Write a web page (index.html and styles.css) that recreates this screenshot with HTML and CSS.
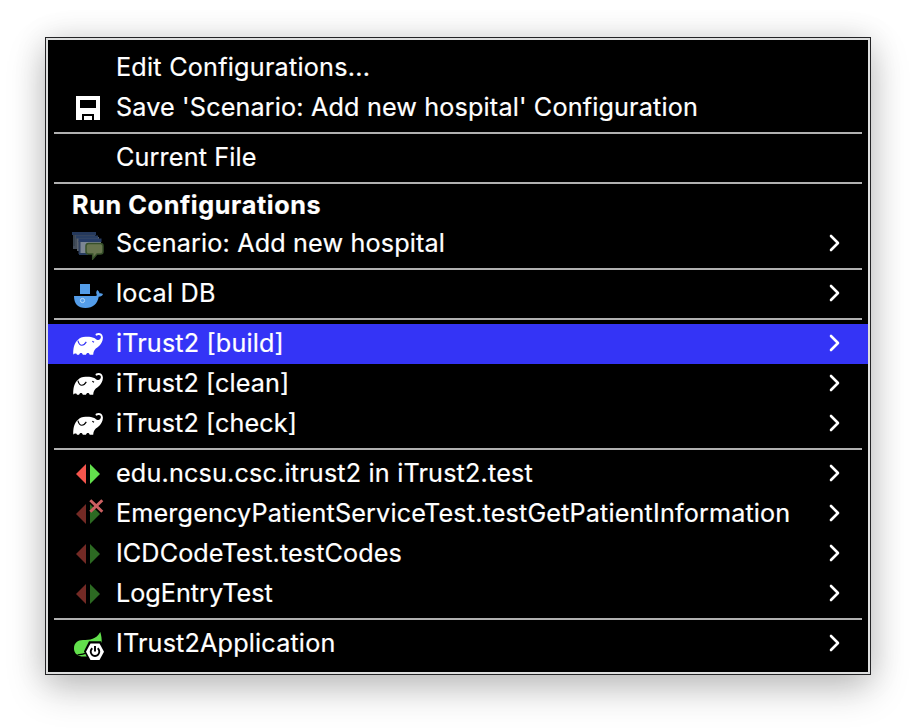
FILE: index.html
```html
<!DOCTYPE html>
<html lang="en">
<head>
<meta charset="utf-8">
<title>Run Configurations</title>
<link rel="stylesheet" href="styles.css">
</head>
<body>
<svg class="defs" width="0" height="0" aria-hidden="true">
  <symbol id="chevron" viewBox="0 0 12 18"><path d="M2 2l7 7-7 7" fill="none" stroke="#fff" stroke-width="2.6" stroke-linecap="round" stroke-linejoin="round"/></symbol>
  <symbol id="gradle" viewBox="0 0 32 32">
    <path d="M1.300 26.700C.9 20.500 2.300 15 6 11.800c1.600-2 4.200-3 7.500-3.100 3.200-.1 6.300 0 8.700 1.300 1.300.7 2.300 1.700 3.500 2 1.800.3 3.200-1.200 3.200-2.900 0-1.600-1.200-2.300-2.500-2-.9.200-1.500.8-2.300.4-.8-.5-.8-1.500.1-2 2.800-1.400 6.500-.1 6.700 3.700.2 4.300-2.600 8.800-7.100 11.300-1.500 1.500-2.300 3-2.600 6.200h-3.500c-.3-1.200-.9-1.700-1.800-1.700s-1.600.5-1.900 1.700h-3.200c-.3-1.200-.9-1.700-1.800-1.700s-1.600.5-1.900 1.700H4.900c-.2-.8-.6-1.100-1.300-1.100-.9 0-1.400.3-2.300 1.100z" fill="#fff"/>
    <path class="line" d="M5.900 12.600c.8 2.900 2 4.600 3.900 4.600 2.100 0 3.400-1.400 4.500-3.300" fill="none" stroke-width="1.100"/>
    <path class="line" d="M20.300 13.200l1.700 1" fill="none" stroke-width="1.200"/>
  </symbol>
  <symbol id="tests" viewBox="0 0 32 32"><path d="M14 6v20L4 16z" fill="#f5554d"/><path d="M18 6v20l10-10z" fill="#62e04c"/></symbol>
  <symbol id="tests-dim" viewBox="0 0 32 32"><path d="M14 6v20L4 16z" fill="#742a25"/><path d="M18 6v20l10-10z" fill="#2c6a22"/></symbol>
</svg>
<main class="menu">
  <div class="item"><span class="icon"></span><span class="label l1">Edit Configurations...</span></div>
  <div class="item">
    <svg class="icon" viewBox="0 0 32 32"><path fill="#fff" fill-rule="evenodd" d="M4 4h24v24h-6v-6H10v6H4zM8 8v8h16V8zM12 24h8v4h-8z"/></svg>
    <span class="label">Save 'Scenario: Add new hospital' Configuration</span>
  </div>
  <hr>
  <div class="item"><span class="icon"></span><span class="label">Current File</span></div>
  <hr>
  <div class="heading"><span class="label">Run Configurations</span></div>
  <div class="item">
    <svg class="icon" viewBox="0 0 32 32">
      <path d="M1 5h22v16H1z" fill="#444d5a"/><path d="M0 4h24v3H0z" fill="#25395c"/><path d="M1 7h2v11H1z" fill="#38434f"/>
      <path d="M5 9h22v14H5z" fill="#5a626c"/><path d="M4 7.500h22v3H4z" fill="#293f64"/>
      <path d="M8 13h21v13H8z" fill="#7c8694"/><path d="M6.500 10.500h23v3.500h-23z" fill="#263c66"/><path d="M6.500 13h2v13h-2z" fill="#30415f"/><path d="M7 25h9v2H7z" fill="#263b5e"/>
      <path d="M16.500 15.500h12q2.500 0 2.500 2.500v5.500q0 2.500-2.500 2.500H25l-4.300 5v-5h-4.200q-2.500 0-2.500-2.500V18q0-2.500 2.500-2.500z" fill="#68754f" stroke="#37502a" stroke-width="1.500"/>
    </svg>
    <span class="label">Scenario: Add new hospital</span><svg class="arrow"><use href="#chevron"/></svg>
  </div>
  <hr>
  <div class="item">
    <svg class="icon" viewBox="0 0 32 32"><path fill="#549de9" d="M8 6h10v10H8zM2 18h20.500c1.500 0 2.300-.3 2.400-1-.9-1.700-.9-3.600.3-5 1.400.8 2.100 2 2.200 3.300 1.300-.3 2.600 0 3.600.7-.6 1.900-2.200 2.700-4.300 2.800C25.500 26 21 30 13.500 30 6 30 2 26 2 18z"/><circle cx="10.500" cy="22.500" r="2.100" fill="none" stroke="#b7dafb" stroke-width="1"/></svg>
    <span class="label l6">local DB</span><svg class="arrow"><use href="#chevron"/></svg>
  </div>
  <hr>
  <div class="item selected"><svg class="icon"><use href="#gradle"/></svg><span class="label">iTrust2 [build]</span><svg class="arrow"><use href="#chevron"/></svg></div>
  <div class="item"><svg class="icon"><use href="#gradle"/></svg><span class="label l8">iTrust2 [clean]</span><svg class="arrow"><use href="#chevron"/></svg></div>
  <div class="item"><svg class="icon"><use href="#gradle"/></svg><span class="label l8">iTrust2 [check]</span><svg class="arrow"><use href="#chevron"/></svg></div>
  <hr>
  <div class="item"><svg class="icon"><use href="#tests"/></svg><span class="label l10">edu.ncsu.csc.itrust2 in iTrust2.test</span><svg class="arrow"><use href="#chevron"/></svg></div>
  <div class="item"><svg class="icon" viewBox="0 0 32 32"><use href="#tests-dim"/><path d="M18.300 2.300l12 11.400m0-11.400l-12 11.400" stroke="#cb6062" stroke-width="2.900"/></svg><span class="label">EmergencyPatientServiceTest.testGetPatientInformation</span><svg class="arrow"><use href="#chevron"/></svg></div>
  <div class="item"><svg class="icon"><use href="#tests-dim"/></svg><span class="label l8">ICDCodeTest.testCodes</span><svg class="arrow"><use href="#chevron"/></svg></div>
  <div class="item"><svg class="icon"><use href="#tests-dim"/></svg><span class="label l13">LogEntryTest</span><svg class="arrow"><use href="#chevron"/></svg></div>
  <hr>
  <div class="item">
    <svg class="icon" viewBox="0 0 32 32">
      <path d="M28.300 4c1 3.500 1.700 7 1.300 11L20 28.500H9.500C4.500 27.500 2 24.500 2 20.500 2 15 5.500 12 11 12c7 0 13-.5 17.300-8z" fill="#62e04c"/>
      <path d="M5.500 26.800q6-.2 9.500-2.200" fill="none" stroke="#000" stroke-width="1.300"/>
      <path d="M17 13.300h12l5 10-5 10H17l-5-10z" fill="#000"/>
      <path d="M18.500 15.500h9L32 23.700 27.500 32h-9L14 23.700z" fill="#fff"/>
      <path d="M20.300 20.300a4.300 4.300 0 1 0 5.400 0M23 18v5.500" fill="none" stroke="#000" stroke-width="1.900"/>
    </svg>
    <span class="label l10">ITrust2Application</span><svg class="arrow"><use href="#chevron"/></svg>
  </div>
</main>
</body>
</html>
```
FILE: styles.css
```css
* { box-sizing: border-box; }
body {
  margin: 0;
  height: 728px;
  padding: 37px 45px;
  overflow: hidden;
  background: #fff;
  color: #fff;
  font-family: Inter, "Liberation Sans", sans-serif;
  font-size: 25.200px;
}
.defs { position: absolute; }
.menu {
  width: 826px;
  height: 638px;
  padding: 10px 2px;
  background: #000;
  border: 1px solid #242426;
  box-shadow: inset 0 0 0 2px #dedfdf, 0 14px 36px rgba(0, 0, 0, .22), 0 2px 30px rgba(0, 0, 0, .12);
}
.item {
  display: flex;
  align-items: center;
  height: 40px;
  padding: 0 27px 0 24px;
}
.selected { background: #3434f6; }
.selected .icon { color: #3434f6; }
.icon { flex: none; width: 32px; height: 32px; margin-right: 12px; color: #000; }
.label {
  height: 40px;
  line-height: 38px;
  letter-spacing: .15px;
  white-space: nowrap;
  -webkit-text-stroke: .2px #fff;
}
.l1, .l6 { letter-spacing: .23px; }
.l8 { letter-spacing: .1px; }
.l10 { letter-spacing: .17px; }
.l13 { letter-spacing: 0; }
.heading { height: 36px; padding-left: 24px; font-weight: 700; }
.heading .label { display: block; height: 36px; line-height: 34px; letter-spacing: .62px; }
.arrow { flex: none; width: 12px; height: 18px; margin: -2px 0 0 auto; }
.line { stroke: currentColor; }
hr { height: 2px; margin: 4px 6px; border: 0; background: #b0b0b0; }
```
